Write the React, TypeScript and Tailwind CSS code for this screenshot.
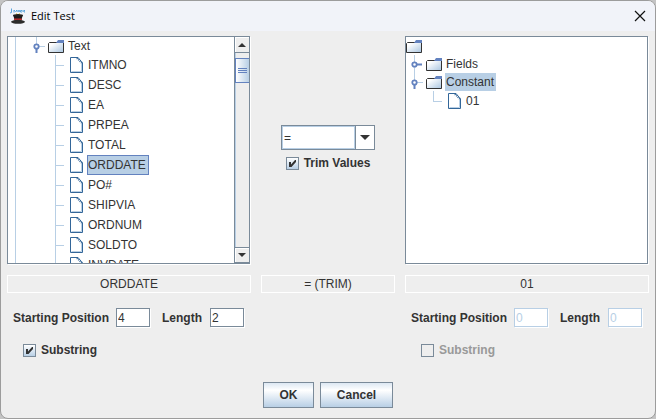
import { useState } from 'react'
import type { ReactNode } from 'react'

const textFields = ['ITMNO', 'DESC', 'EA', 'PRPEA', 'TOTAL', 'ORDDATE', 'PO#', 'SHIPVIA', 'ORDNUM', 'SOLDTO', 'INVDATE']

function HatIcon() {
  return (
    <svg width="16" height="16" viewBox="0 0 16 16" aria-hidden="true">
      <path d="M1.500 0.500v4L0 5M4 4.500V2l1.500 1.500L7 2v2M8 4l1-2 1 2M12 2.500h-1.500V4H12M13 2v2M15 2.500h-1V4h1" fill="none" stroke="#5aa5dc" />
      <path d="M6 5l2 1.500L10 5v3H6z" fill="#e8c53a" />
      <ellipse cx="8" cy="7.500" rx="5" ry="1.500" fill="#222" />
      <path d="M3.500 7.500h9l-1 5h-7z" fill="#1c1c1c" />
      <path d="M4 10.500h8l-.5 2h-7z" fill="#c32a2a" />
      <ellipse cx="8" cy="13.800" rx="7" ry="2" fill="#2b2b2b" />
    </svg>
  )
}

function FolderIcon() {
  return (
    <svg width="17" height="14" viewBox="0 0 17 14" className="shrink-0" aria-hidden="true">
      <defs>
        <linearGradient id="folder" x1="0" y1="0" x2="1" y2="1">
          <stop offset="0.200" stopColor="#fff" />
          <stop offset="1" stopColor="#a9c5e0" />
        </linearGradient>
      </defs>
      <path d="M0.500 4.500L1.500 3.500H15.500V13.500H0.500z" fill="url(#folder)" stroke="#333" />
      <path d="M8 4L10 1H16V4z" fill="#6382bf" />
    </svg>
  )
}

function FileIcon() {
  return (
    <svg width="13" height="16" viewBox="0 0 13 16" className="shrink-0" aria-hidden="true">
      <path d="M0.500 0.500H8L12.500 6V15.500H0.500z" fill="#fff" stroke="#336699" />
      <path d="M1.500 14.500H11.500V7" fill="none" stroke="#b8cfe5" />
      <path d="M7 1L12 6" stroke="#336699" strokeWidth="2" strokeDasharray="1 1" />
    </svg>
  )
}

function Handle({ open }: { open: boolean }) {
  return (
    <svg width="16" height="18" viewBox="0 0 16 18" className="shrink-0" aria-hidden="true">
      <path d="M4.500 0V9" stroke="#b8cfe5" />
      {open ? (
        <>
          <path d="M7 9.500H13" stroke="#b8cfe5" />
          <path d="M4.500 11V16" stroke="#6382bf" strokeWidth="2" />
        </>
      ) : (
        <>
          <path d="M4.500 11V18" stroke="#b8cfe5" />
          <path d="M6 9.500H12" stroke="#6382bf" strokeWidth="2" />
        </>
      )}
      <circle cx="4.500" cy="9.500" r="2.200" fill="#fff" stroke="#6382bf" strokeWidth="1.800" />
    </svg>
  )
}

function Panel({ children }: { children: ReactNode }) {
  return (
    <div className="mr-px mb-px flex h-57 overflow-hidden border border-[#7a8a99] bg-white shadow-[1px_1px_0_#fff]">
      {children}
    </div>
  )
}

function ScrollBar() {
  return (
    <div className="flex w-[15px] shrink-0 flex-col border-l border-[#7a8a99] bg-[#eeeeee]">
      <button type="button" aria-label="Scroll up" className="flex h-4 items-center justify-center border-b border-[#7a8a99] shadow-[inset_1px_1px_0_#fff]">
        <svg width="8" height="4" viewBox="0 0 8 4"><path d="M4 0L8 4H0z" fill="#333" /></svg>
      </button>
      <div className="flex-1 border-l border-[#b8cfe5] pt-[5px]">
        <div className="-ml-px flex h-[25px] flex-col items-center justify-center gap-px border-y border-l border-[#6382bf] bg-linear-to-r from-white to-[#b8cfe5]">
          <span className="h-px w-[9px] bg-[#6382bf]" />
          <span className="h-px w-[9px] bg-[#6382bf]" />
          <span className="h-px w-[9px] bg-[#6382bf]" />
        </div>
      </div>
      <button type="button" aria-label="Scroll down" className="flex h-4 items-center justify-center border-y border-[#7a8a99] shadow-[inset_1px_1px_0_#fff]">
        <svg width="8" height="4" viewBox="0 0 8 4"><path d="M0 0H8L4 4z" fill="#333" /></svg>
      </button>
    </div>
  )
}

type CheckProps = {
  label: string
  checked: boolean
  disabled?: boolean
  onChange?: (value: boolean) => void
}

function Check({ label, checked, disabled, onChange }: CheckProps) {
  return (
    <label className={`flex items-center gap-[5px] font-bold ${disabled ? 'text-[#999999]' : ''}`}>
      <span className="grid h-[13px] w-[13px]">
        <input
          type="checkbox"
          checked={checked}
          disabled={disabled}
          onChange={(e) => onChange?.(e.target.checked)}
          className="col-start-1 row-start-1 h-[13px] w-[13px] appearance-none border border-[#7a8a99] bg-linear-to-b from-white to-[#b8cfe5] disabled:from-[#eeeeee] disabled:to-[#eeeeee]"
        />
        {checked && (
          <svg width="13" height="13" viewBox="0 0 13 13" className="pointer-events-none col-start-1 row-start-1">
            <path d="M3 5H5V7.500L9 3H10V5L5.500 10H3z" fill="#333" />
          </svg>
        )}
      </span>
      {label}
    </label>
  )
}

function Substring({ side, start, length, disabled }: { side: string; start: string; length: string; disabled?: boolean }) {
  const [on, setOn] = useState(!disabled)
  const box = 'h-[19px] w-[34px] self-start border border-[#7a8a99] bg-white px-px shadow-[1px_1px_0_#fff] disabled:border-[#b8cfe5] disabled:text-[#b8cfe5]'
  return (
    <div className="pl-1.5">
      <div className="flex h-5 items-center">
        <label htmlFor={`${side}-start`} className="w-[103px] font-bold whitespace-nowrap">Starting Position</label>
        <input id={`${side}-start`} defaultValue={start} disabled={disabled} className={box} />
        <label htmlFor={`${side}-length`} className="ml-3 w-12 font-bold">Length</label>
        <input id={`${side}-length`} defaultValue={length} disabled={disabled} className={box} />
      </div>
      <div className="flex pt-3.5 pl-2.5">
        <Check label="Substring" checked={on} disabled={disabled} onChange={setOn} />
      </div>
    </div>
  )
}

export default function App() {
  const [selected, setSelected] = useState('ORDDATE')
  const [trim, setTrim] = useState(true)
  const [operator, setOperator] = useState('=')
  const button = 'h-[26px] border border-[#7a8a99] bg-linear-to-b from-[#dde8f3] via-white via-30% to-[#b8cfe5] font-bold'

  return (
    <div className="bg-[#c4c4c4] font-['Liberation_Sans',Arial,sans-serif] text-xs text-[#333333]">
      <div className="overflow-hidden rounded-lg border border-[#9c9c9c] bg-[#eeeeee]">
        <header className="flex h-[30px] items-center bg-[#f1f3f9] px-[9px] font-['Open_Sans',sans-serif] text-black">
          <HatIcon />
          <h1 className="ml-[5px] text-[11px]">Edit Test</h1>
          <button type="button" aria-label="Close" className="ml-auto">
            <svg width="12" height="12" viewBox="0 0 12 12"><path d="M1 1L11 11M11 1L1 11" stroke="#111" strokeWidth="1.200" /></svg>
          </button>
        </header>

        <main className="px-1.5 pt-[5px] pb-2.5">
          <div className="grid grid-cols-[minmax(0,1fr)_134px_minmax(0,1fr)] gap-x-2.5">
            <Panel>
              <div className="min-w-0 flex-1 overflow-hidden">
                <div className="ml-[7px] border-l border-[#b8cfe5]">
                  <div className="flex h-[18px] items-center pl-4">
                    <Handle open />
                    <FolderIcon />
                    <span className="ml-[3px]">Text</span>
                  </div>
                  <ul className="ml-[39px] border-l border-[#b8cfe5]">
                    {textFields.map((name) => (
                      <li key={name} className="flex h-5 items-center" onClick={() => setSelected(name)}>
                        <span className="mr-1.5 h-px w-2 bg-[#b8cfe5]" />
                        <FileIcon />
                        <span className={`ml-1 flex h-5 items-center border pr-0.5 ${selected === name ? 'border-[#6382bf] bg-[#b8cfe5]' : 'border-transparent'}`}>
                          {name}
                        </span>
                      </li>
                    ))}
                  </ul>
                </div>
              </div>
              <ScrollBar />
            </Panel>

            <div className="flex flex-col items-center justify-center">
              <div className="relative w-[94px] border border-[#7a8a99]">
                <select
                  aria-label="Operator"
                  value={operator}
                  onChange={(e) => setOperator(e.target.value)}
                  className="block h-[23px] w-full appearance-none border border-[#b8cfe5] bg-white pl-px"
                >
                  <option>=</option>
                  <option>&lt;</option>
                  <option>&gt;</option>
                </select>
                <span className="pointer-events-none absolute inset-y-0 right-0 flex w-[19px] items-center justify-center border-l border-[#7a8a99] bg-white shadow-[-1px_0_0_#b8cfe5]">
                  <svg width="10" height="5" viewBox="0 0 10 5"><path d="M0 0H10L5 5z" fill="#333" /></svg>
                </span>
              </div>
              <div className="flex h-[26px] items-center">
                <Check label="Trim Values" checked={trim} onChange={setTrim} />
              </div>
            </div>

            <Panel>
              <div>
                <div className="flex h-[18px] items-center">
                  <FolderIcon />
                </div>
                <div className="flex h-[18px] items-center pl-1">
                  <Handle open={false} />
                  <FolderIcon />
                  <span className="ml-[3px]">Fields</span>
                </div>
                <div className="flex h-[18px] items-center pl-1">
                  <Handle open />
                  <FolderIcon />
                  <span className="ml-0.5 flex h-[18px] items-center bg-[#b8cfe5] pr-0.5 pl-px">Constant</span>
                </div>
                <div className="flex h-5 items-center pl-[27px]">
                  <span className="mr-1.5 h-[11px] w-[9px] self-start border-b border-l border-[#b8cfe5]" />
                  <FileIcon />
                  <span className="ml-[5px]">01</span>
                </div>
              </div>
            </Panel>
          </div>

          <div className="mt-2.5 grid grid-cols-[minmax(0,1fr)_134px_minmax(0,1fr)] gap-x-2.5 text-center leading-4">
            <div className="border border-white">{selected}</div>
            <div className="border border-white">{operator}{trim ? ' (TRIM)' : ''}</div>
            <div className="border border-white">01</div>
          </div>

          <div className="mt-[15px] grid grid-cols-[minmax(0,1fr)_134px_minmax(0,1fr)] gap-x-2.5">
            <Substring side="left" start="4" length="2" />
            <span />
            <Substring side="right" start="0" length="0" disabled />
          </div>

          <div className="mt-6 flex justify-center gap-1.5">
            <button type="button" className={`${button} w-[51px]`}>OK</button>
            <button type="button" className={`${button} w-[73px]`}>Cancel</button>
          </div>
        </main>
      </div>
    </div>
  )
}
